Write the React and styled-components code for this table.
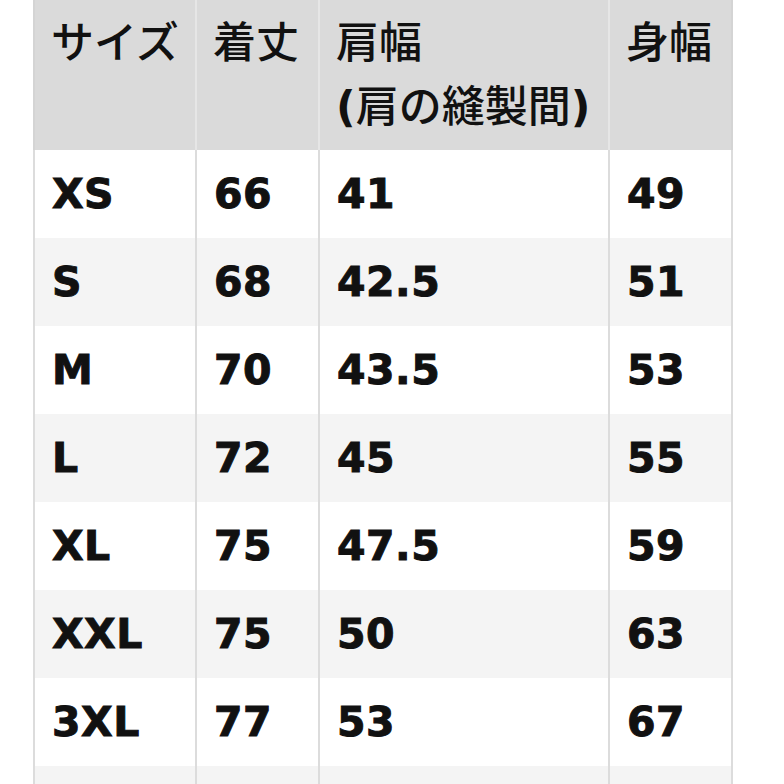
import React from 'react';
import styled, { createGlobalStyle } from 'styled-components';

const Global = createGlobalStyle`
  html, body {
    margin: 0;
    padding: 0;
    background: #ffffff;
    overflow: hidden;
  }
`;

const S = {
  Page: styled.div`
    width: 784px;
    height: 784px;
    padding-left: 33px;
    box-sizing: border-box;
    overflow: hidden;
  `,
  Table: styled.table`
    border-collapse: collapse;
    table-layout: fixed;
    width: 698px;
    color: #111111;
  `,
  HeadCell: styled.th`
    background: #dadada;
    height: 150px;
    padding: 7px 0 0 16px;
    box-sizing: border-box;
    vertical-align: top;
    text-align: left;
    font-family: 'Noto Sans CJK JP', 'Noto Sans', sans-serif;
    font-size: 43px;
    font-weight: 500;
    line-height: 64px;
    border-left: 2px solid #e6e6e6;
    &:first-child {
      border-left: 2px solid #d4d4d4;
    }
    &:last-child {
      border-right: 2px solid #d4d4d4;
    }
  `,
  Paren: styled.span`
    font-family: 'DejaVu Sans', sans-serif;
    font-weight: 700;
  `,
  Row: styled.tr`
    background: ${(p) => (p.$shaded ? '#f4f4f4' : '#ffffff')};
  `,
  Cell: styled.td`
    height: 88px;
    padding: 0 0 0 17px;
    box-sizing: border-box;
    font-family: 'DejaVu Sans', 'Liberation Sans', sans-serif;
    font-size: 41px;
    font-weight: 700;
    letter-spacing: 0.5px;
    -webkit-text-stroke: 1px #111111;
    border-left: 2px solid #dcdcdc;
    &:last-child {
      border-right: 2px solid #dcdcdc;
    }
  `,
};

const rows = [
  ['XS', '66', '41', '49'],
  ['S', '68', '42.5', '51'],
  ['M', '70', '43.5', '53'],
  ['L', '72', '45', '55'],
  ['XL', '75', '47.5', '59'],
  ['XXL', '75', '50', '63'],
  ['3XL', '77', '53', '67'],
  ['', '', '', ''],
];

function App() {
  return (
    <S.Page>
      <Global />
      <S.Table>
        <colgroup>
          <col style={{ width: 162 }} />
          <col style={{ width: 123 }} />
          <col style={{ width: 290 }} />
          <col style={{ width: 123 }} />
        </colgroup>
        <thead>
          <tr>
            <S.HeadCell>サイズ</S.HeadCell>
            <S.HeadCell>着丈</S.HeadCell>
            <S.HeadCell>
              肩幅
              <br />
              <S.Paren>(</S.Paren>肩の縫製間<S.Paren>)</S.Paren>
            </S.HeadCell>
            <S.HeadCell>身幅</S.HeadCell>
          </tr>
        </thead>
        <tbody>
          {rows.map((r, i) => (
            <S.Row key={i} $shaded={i % 2 === 1}>
              {r.map((v, j) => (
                <S.Cell key={j}>{v}</S.Cell>
              ))}
            </S.Row>
          ))}
        </tbody>
      </S.Table>
    </S.Page>
  );
}

export default App;
